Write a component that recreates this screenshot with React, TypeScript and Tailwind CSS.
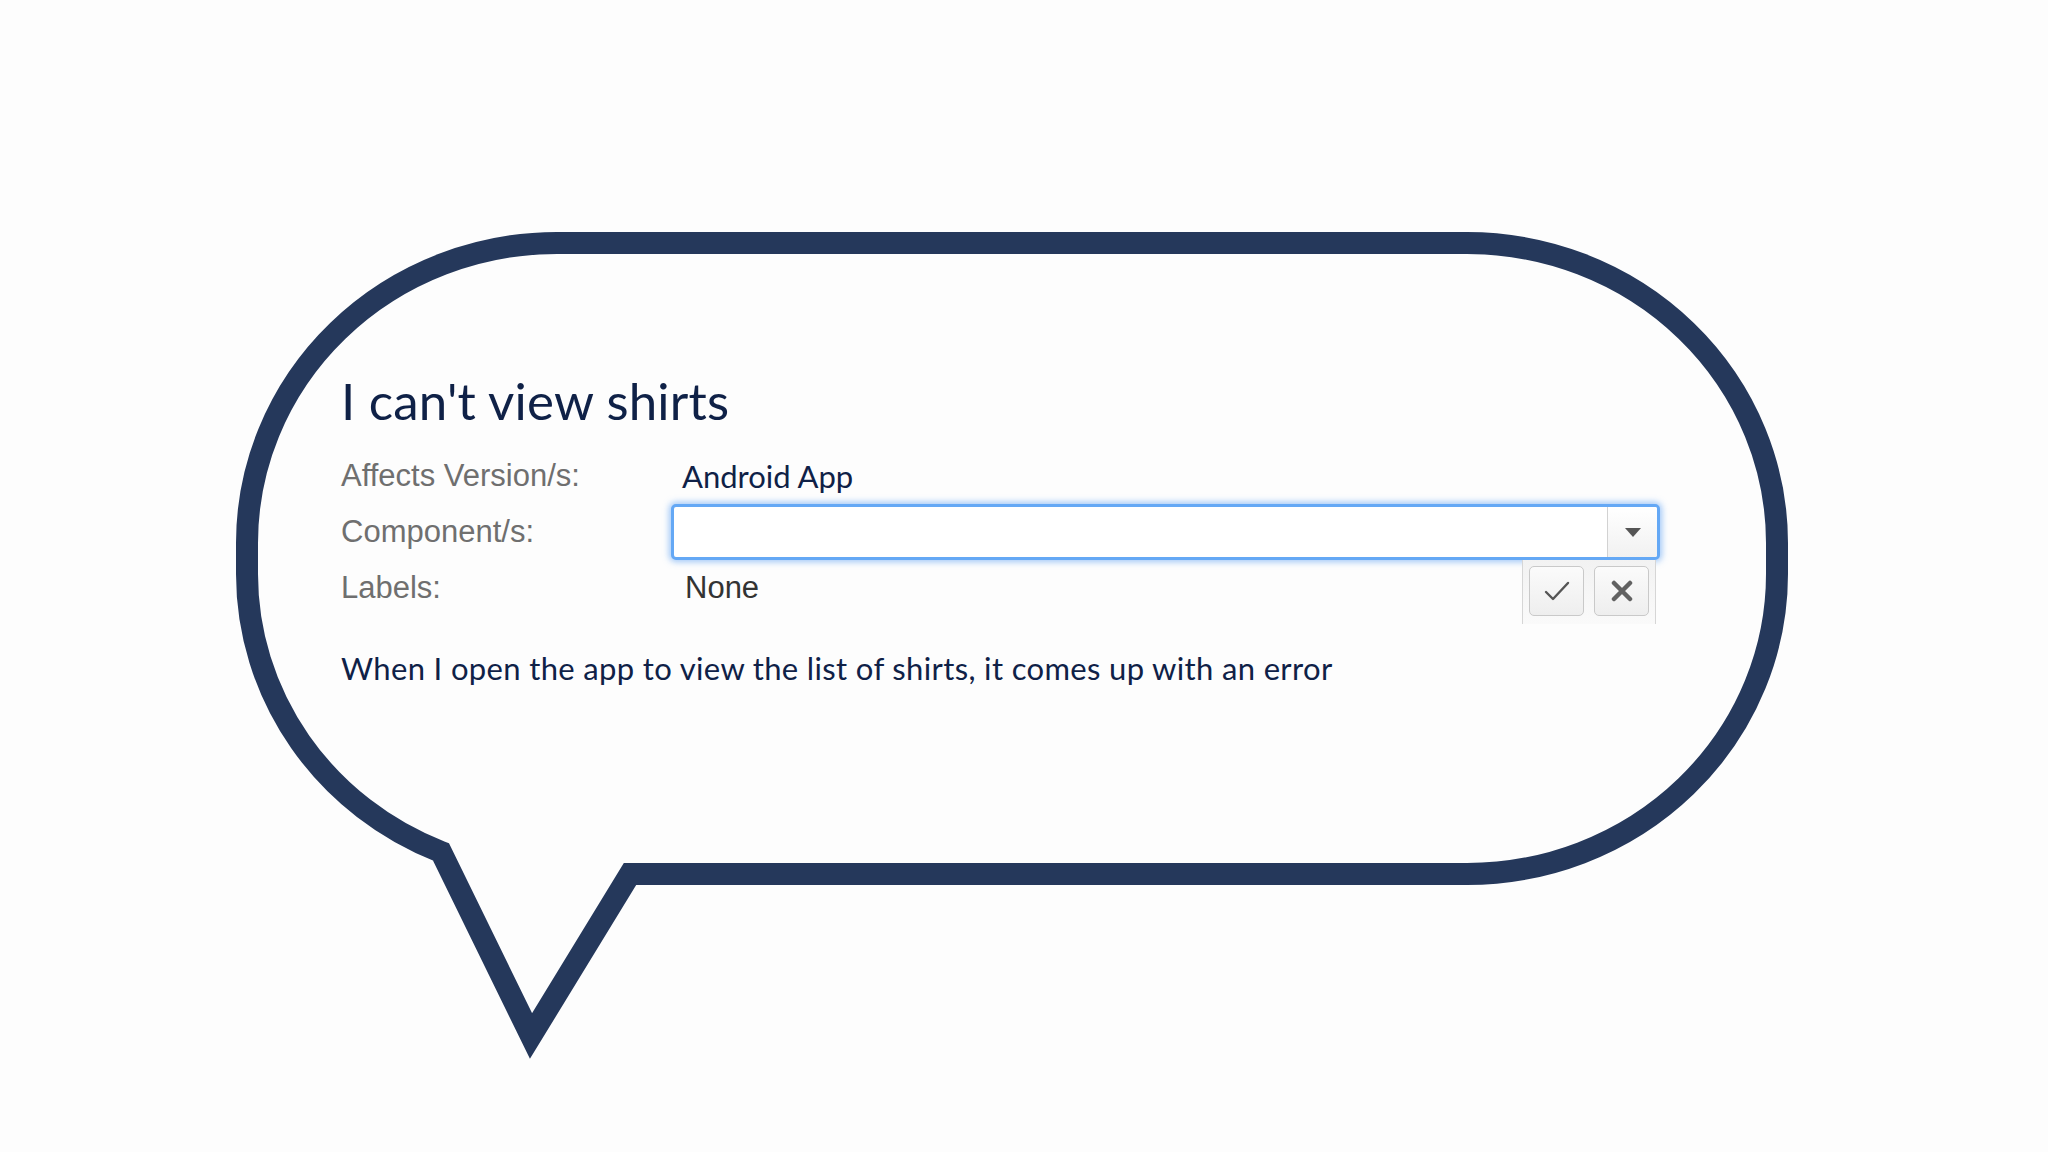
import React from 'react';

const labelFont = "font-['Liberation_Sans',Arial,sans-serif]";
const bodyFont = "font-['Lato',sans-serif]";

function SpeechBubble() {
  return (
    <svg className="absolute inset-0" width={2048} height={1152} viewBox="0 0 2048 1152" fill="none">
      <path
        d="M 630 874 L 531 1036 L 441 852 A 310 300 0 0 1 247 574 L 247 543 A 310 300 0 0 1 557 243 L 1467 243 A 310 300 0 0 1 1777 543 L 1777 574 A 310 300 0 0 1 1467 874 Z"
        stroke="#25385b"
        strokeWidth={22}
        strokeLinejoin="miter"
        strokeMiterlimit={10}
      />
    </svg>
  );
}

function Row({ label, children }: { label: string; children: React.ReactNode }) {
  return (
    <div className="flex h-[56px] items-center">
      <div className={`w-[330px] text-[31px] text-[#6f6f6f] ${labelFont}`}>{label}</div>
      <div className="flex items-center">{children}</div>
    </div>
  );
}

function ComponentPicker() {
  return (
    <div className="relative h-[56px] w-[989px]">
      <div className="flex h-full overflow-hidden rounded-[5px] border-[3px] border-[#64a8f5] bg-white shadow-[0_0_6px_2px_rgba(100,165,245,0.6)]">
        <div className="flex-1" />
        <div className="flex w-[50px] items-center justify-center border-l border-[#d2d2d2] bg-gradient-to-b from-white to-[#f1f1f1]">
          <svg width="16" height="9" viewBox="0 0 16 9">
            <path d="M0 0h16L8 9z" fill="#555" />
          </svg>
        </div>
      </div>
      <div className="absolute right-[4px] top-full flex h-[64px] gap-[10px] border-x border-[#d6d6d6] bg-gradient-to-b from-[#f2f2f2] to-[#fafafa] px-[6px] pt-[6px]">
        <button className="flex h-[50px] w-[55px] items-center justify-center rounded-[5px] border border-[#c9c9c9] bg-gradient-to-b from-[#fbfbfb] to-[#eeeeee]">
          <svg width="26" height="22" viewBox="0 0 26 22" fill="none">
            <path d="M2 12l7 7L24 3" stroke="#555" strokeWidth={2.4} strokeLinecap="round" strokeLinejoin="round" />
          </svg>
        </button>
        <button className="flex h-[50px] w-[55px] items-center justify-center rounded-[5px] border border-[#c9c9c9] bg-gradient-to-b from-[#fbfbfb] to-[#eeeeee]">
          <svg width="22" height="22" viewBox="0 0 22 22" fill="none">
            <path d="M3 3l16 16M19 3L3 19" stroke="#616161" strokeWidth={4.5} strokeLinecap="round" />
          </svg>
        </button>
      </div>
    </div>
  );
}

export default function App() {
  return (
    <div className="relative h-[1152px] w-[2048px] overflow-hidden bg-[#fdfdfd]">
      <SpeechBubble />
      <div className="relative flex flex-col pl-[341px] pt-[371px]">
        <h1 className={`text-[51px] leading-[60px] tracking-[0.2px] text-[#0f2147] ${bodyFont}`}>I can't view shirts</h1>

        <div className="mt-[17px] flex flex-col">
          <Row label="Affects Version/s:">
            <span className={`pl-[11px] text-[31px] text-[#0f2147] ${bodyFont}`}>Android App</span>
          </Row>
          <Row label="Component/s:">
            <ComponentPicker />
          </Row>
          <Row label="Labels:">
            <span className={`pl-[14px] text-[31px] text-[#333333] ${labelFont}`}>None</span>
          </Row>
        </div>

        <p className={`mt-[34px] text-[31px] leading-[36px] tracking-[0.35px] text-[#0f2147] ${bodyFont}`}>
          When I open the app to view the list of shirts, it comes up with an error
        </p>
      </div>
    </div>
  );
}
